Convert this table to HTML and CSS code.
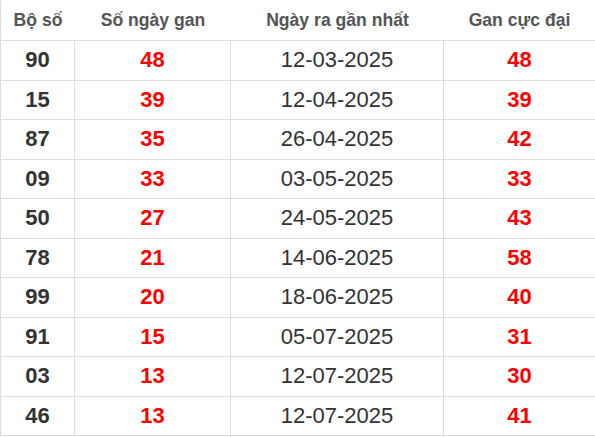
FILE: index.html
```html
<!DOCTYPE html>
<html lang="vi">
<head>
<meta charset="utf-8">
<title>Lô gan</title>
<link rel="stylesheet" href="styles.css">
</head>
<body>
<table class="gan-table">
  <colgroup>
    <col class="c1"><col class="c2"><col class="c3"><col class="c4">
  </colgroup>
  <thead>
    <tr><th>Bộ số</th><th>Số ngày gan</th><th>Ngày ra gần nhất</th><th>Gan cực đại</th></tr>
  </thead>
  <tbody>
    <tr><td class="num">90</td><td class="red">48</td><td class="date">12-03-2025</td><td class="red">48</td></tr>
    <tr><td class="num">15</td><td class="red">39</td><td class="date">12-04-2025</td><td class="red">39</td></tr>
    <tr><td class="num">87</td><td class="red">35</td><td class="date">26-04-2025</td><td class="red">42</td></tr>
    <tr><td class="num">09</td><td class="red">33</td><td class="date">03-05-2025</td><td class="red">33</td></tr>
    <tr><td class="num">50</td><td class="red">27</td><td class="date">24-05-2025</td><td class="red">43</td></tr>
    <tr><td class="num">78</td><td class="red">21</td><td class="date">14-06-2025</td><td class="red">58</td></tr>
    <tr><td class="num">99</td><td class="red">20</td><td class="date">18-06-2025</td><td class="red">40</td></tr>
    <tr><td class="num">91</td><td class="red">15</td><td class="date">05-07-2025</td><td class="red">31</td></tr>
    <tr><td class="num">03</td><td class="red">13</td><td class="date">12-07-2025</td><td class="red">30</td></tr>
    <tr><td class="num">46</td><td class="red">13</td><td class="date">12-07-2025</td><td class="red">41</td></tr>
  </tbody>
</table>
</body>
</html>
```

FILE: styles.css
```css
html, body {
  margin: 0;
  padding: 0;
  background: #ffffff;
}

.gan-table {
  width: 595px;
  border-collapse: separate;
  border-spacing: 0;
  table-layout: fixed;
  font-family: "Liberation Sans", Arial, sans-serif;
}

.c1 { width: 75px; }
.c2 { width: 156px; }
.c3 { width: 213px; }
.c4 { width: 151px; }

.gan-table th {
  box-sizing: border-box;
  height: 41px;
  padding: 0;
  font-size: 17.6px;
  font-weight: bold;
  color: #555555;
  text-align: center;
  vertical-align: middle;
  border-bottom: 1px solid #dddddd;
}

.gan-table th:first-child,
.gan-table td:first-child {
  border-left: 1px solid #dddddd;
}

.gan-table td {
  box-sizing: border-box;
  height: 39.5px;
  padding: 0;
  font-size: 22px;
  text-align: center;
  vertical-align: middle;
  border-bottom: 1px solid #dddddd;
  color: #333333;
}

.gan-table td:not(:last-child) {
  border-right: 1px solid #dddddd;
}

.gan-table td.num {
  font-weight: bold;
  color: #333333;
}

.gan-table td.red {
  font-weight: bold;
  color: #ff0000;
}

.gan-table td.date {
  font-weight: normal;
  color: #333333;
}
```
